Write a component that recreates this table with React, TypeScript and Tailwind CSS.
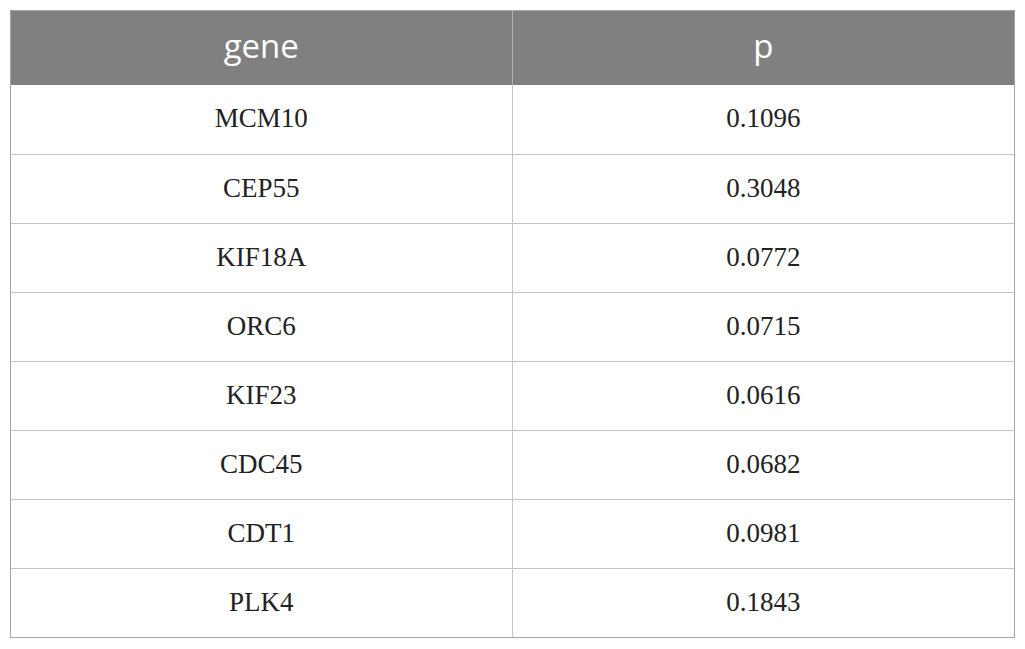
const rows: [string, string][] = [
	["MCM10", "0.1096"],
	["CEP55", "0.3048"],
	["KIF18A", "0.0772"],
	["ORC6", "0.0715"],
	["KIF23", "0.0616"],
	["CDC45", "0.0682"],
	["CDT1", "0.0981"],
	["PLK4", "0.1843"],
]

const App = () => {
	return (
		<div className="w-[1025px] h-[649px] bg-white pt-[10px] pl-[10px]">
			<div className="w-[1005px] border border-[#a6a6a6]">
				<div className="grid grid-cols-2 h-[74px] bg-[#808080] text-white text-[33px] font-['Open_Sans',sans-serif]">
					<div className="flex items-center justify-center border-r border-[#b0b0b0] pb-[4px]">gene</div>
					<div className="flex items-center justify-center pb-[4px]">p</div>
				</div>
				{rows.map(([gene, p], i) => (
					<div
						key={gene}
						className={`grid grid-cols-2 h-[69px] text-[27px] text-[#222] font-['Liberation_Serif',serif] ${i > 0 ? 'border-t border-[#c4c4c4]' : ''}`}
					>
						<div className="flex items-center justify-center border-r border-[#c4c4c4] pb-[2px]">{gene}</div>
						<div className="flex items-center justify-center pb-[2px]">{p}</div>
					</div>
				))}
			</div>
		</div>
	)
}

export default App
